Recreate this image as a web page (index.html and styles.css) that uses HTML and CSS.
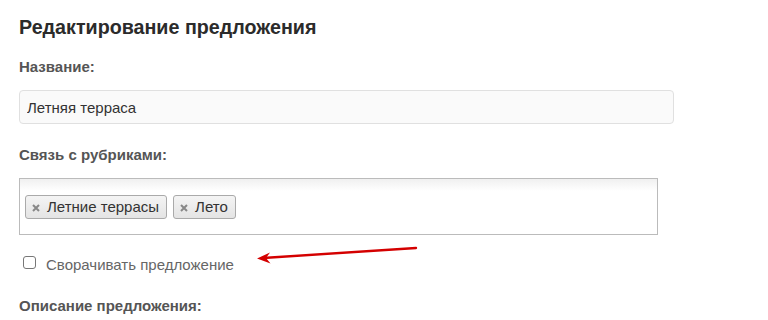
FILE: index.html
```html
<!DOCTYPE html>
<html lang="ru">
<head>
  <meta charset="UTF-8" />
  <title>Редактирование предложения</title>
  <link rel="stylesheet" href="styles.css">
</head>
<body>
  <div class="container">
    <h2>Редактирование предложения</h2>

    <label class="field-label">Название:</label>
    <input type="text" class="text-input" value="Летняя терраса">

    <label class="field-label">Связь с рубриками:</label>
    <div class="tags-box">
      <span class="tag">
        <svg class="tag-x" width="8" height="8" viewBox="0 0 8 8"><path d="M1 1 L7 7 M7 1 L1 7" stroke="#888" stroke-width="2"/></svg>
        Летние террасы
      </span>
      <span class="tag">
        <svg class="tag-x" width="8" height="8" viewBox="0 0 8 8"><path d="M1 1 L7 7 M7 1 L1 7" stroke="#888" stroke-width="2"/></svg>
        Лето
      </span>
    </div>

    <label class="check-row">
      <input type="checkbox" class="check">
      <span>Сворачивать предложение</span>
    </label>

    <label class="field-label">Описание предложения:</label>

    <!-- стрелка-подсказка -->
    <svg class="arrow" width="180" height="30" viewBox="0 0 180 30">
      <line x1="161" y1="3" x2="8" y2="13" stroke="#d40000" stroke-width="2.4" stroke-linecap="round"/>
      <path d="M2 13.5 L15 7.5 L11 13 L15.5 18.5 Z" fill="#d40000"/>
    </svg>
  </div>
</body>
</html>
```

FILE: styles.css
```css
body {
  margin: 0;
  padding: 0;
  background: #fff;
  font-family: "Liberation Sans", Arial, sans-serif;
  color: #333;
}
.container {
  position: relative;
  padding: 13px 19px 0;
}
h2 {
  margin: 0 0 16px;
  font-size: 19.7px;
  line-height: 28px;
  color: #2b2b2b;
}
.field-label {
  display: block;
  font-size: 15px;
  font-weight: bold;
  color: #555;
  line-height: 20px;
  margin-bottom: 13px;
}
.text-input {
  display: block;
  box-sizing: border-box;
  width: 655px;
  height: 34px;
  padding: 0 7px;
  margin: 0 0 21px;
  border: 1px solid #e0e0e0;
  border-radius: 4px;
  background: #fafafa;
  font-family: inherit;
  font-size: 15px;
  color: #333;
}
.tags-box {
  box-sizing: border-box;
  width: 639px;
  height: 57px;
  border: 1px solid #bbb;
  background: linear-gradient(#f0f0f0, #fff 12px);
  display: flex;
  align-items: center;
  gap: 6px;
  padding: 0 5px;
  margin-bottom: 21px;
}
.tag {
  display: flex;
  align-items: center;
  height: 24px;
  box-sizing: border-box;
  padding: 0 7px 0 6px;
  border: 1px solid #aaa;
  border-radius: 3px;
  background: linear-gradient(#f4f4f4, #e4e4e4);
  font-size: 15px;
  color: #333;
}
.tag-x {
  margin-right: 7px;
  margin-top: 3px;
}
.check-row {
  display: flex;
  align-items: center;
  gap: 10px;
  padding-left: 4px;
  font-size: 15px;
  color: #666;
  margin-bottom: 23px;
}
.check {
  appearance: none;
  margin: 0;
  width: 13px;
  height: 13px;
  border: 1px solid #777;
  border-radius: 3px;
  background: #fff;
  position: relative;
  top: -2px;
}
.arrow {
  position: absolute;
  left: 255px;
  top: 245px;
}
```
